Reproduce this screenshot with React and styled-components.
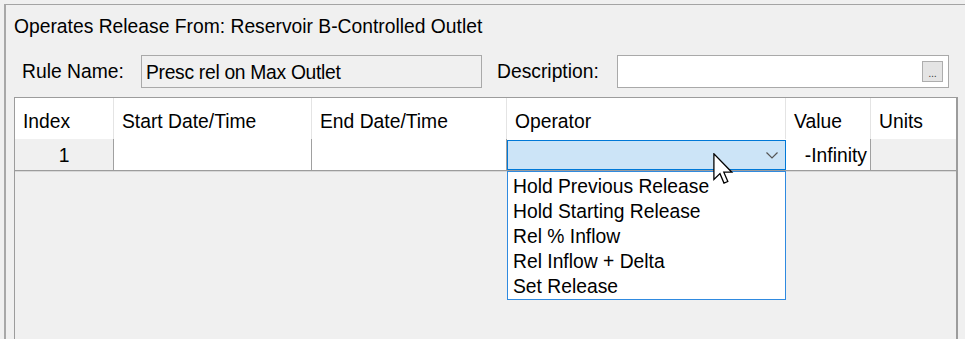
import styled, { createGlobalStyle } from 'styled-components';

const Global = createGlobalStyle`
  html, body {
    margin: 0;
    background: #f0f0f0;
    overflow: hidden;
    font-family: "Liberation Sans", Arial, sans-serif;
    color: #000;
  }
`;

const fs = '19.3px';

const Panel = styled.div`
  margin: 4px 0 0 4px;
  height: calc(100vh - 4px);
  box-sizing: border-box;
  border-top: 1px solid #a4a4a4;
  border-left: 2px solid #a8a8a8;
  padding: 11px 0 0 8px;
  display: flex;
  flex-direction: column;
`;

const Title = styled.div`
  font-size: ${fs};
  line-height: 22px;
`;

const FieldsRow = styled.div`
  display: flex;
  align-items: center;
  margin-top: 17px;
  padding-left: 8px;
`;

const Label = styled.div`
  width: ${p => p.$w}px;
  margin-left: ${p => p.$ml || 0}px;
  font-size: ${fs};
  line-height: 22px;
  flex-shrink: 0;
`;

const TextField = styled.div`
  width: ${p => p.$w}px;
  height: 33px;
  box-sizing: border-box;
  border: 1px solid #a9a9a9;
  background: ${p => (p.$readOnly ? '#f0f0f0' : '#fff')};
  display: flex;
  align-items: center;
  padding: 2px 0 0 4px;
  font-size: ${fs};
  letter-spacing: -0.3px;
  flex-shrink: 0;
`;

const DotsButton = styled.div`
  margin-left: auto;
  margin-right: 5px;
  margin-top: -2px;
  width: 21px;
  height: 21px;
  box-sizing: border-box;
  background: #e4e4e4;
  border: 1px solid #adadad;
  font-size: 11px;
  line-height: 10px;
  color: #444;
  display: flex;
  align-items: flex-end;
  justify-content: center;
  padding-bottom: 3px;
`;

const Table = styled.div`
  margin-top: 9px;
  width: 944px;
  flex: 1;
  box-sizing: border-box;
  border: 1px solid #9c9c9c;
  border-bottom: none;
  border-right: 2px solid #9c9c9c;
  background: #f0f0f0;
`;

const cols = '99px 198px 195px 279px 85px 1fr';

const HeaderRow = styled.div`
  display: grid;
  grid-template-columns: ${cols};
  height: 41px;
  background: #fff;
`;

const HeadCell = styled.div`
  border-right: 1px solid #e4e4e4;
  padding: 13px 0 0 8px;
  font-size: ${fs};
  line-height: 22px;
  &:last-child { border-right: none; }
`;

const DataRow = styled.div`
  display: grid;
  grid-template-columns: ${cols};
  height: 32px;
  box-sizing: border-box;
  border-bottom: 1px solid #9c9c9c;
  box-shadow: 0 1px 0 #d8d8d8;
`;

const Cell = styled.div`
  position: relative;
  border-right: ${p => (p.$noBorder ? 'none' : '1px solid #a0a0a0')};
  background: ${p => (p.$grey ? '#f0f0f0' : '#fff')};
  display: flex;
  align-items: center;
  justify-content: ${p => p.$align || 'flex-start'};
  padding-right: ${p => (p.$align === 'flex-end' ? '3px' : '0')};
  padding-top: 2px;
  font-size: ${fs};
  &:last-child { border-right: none; }
`;

const Combo = styled.div`
  position: absolute;
  left: 0;
  top: 1px;
  width: 279px;
  height: 30px;
  box-sizing: border-box;
  border: 1px solid #0078d7;
  background: #cce4f7;
  display: flex;
  align-items: center;
  justify-content: flex-end;
  padding-right: 7px;
`;

const ListBox = styled.div`
  position: absolute;
  left: 0;
  top: 32px;
  width: 279px;
  box-sizing: border-box;
  border: 1px solid #2f8ae0;
  background: #fff;
  padding: 2px 0 0;
  z-index: 2;
`;

const Option = styled.div`
  height: 25px;
  line-height: 25px;
  padding-left: 5px;
  font-size: ${fs};
  white-space: nowrap;
`;

const Pointer = styled.svg`
  position: absolute;
  left: 206px;
  top: 14px;
  z-index: 3;
`;

const operators = [
  'Hold Previous Release',
  'Hold Starting Release',
  'Rel % Inflow',
  'Rel Inflow + Delta',
  'Set Release',
];

const headers = ['Index', 'Start Date/Time', 'End Date/Time', 'Operator', 'Value', 'Units'];

export default function App() {
  return (
    <>
      <Global />
      <Panel>
        <Title>Operates Release From: Reservoir B-Controlled Outlet</Title>
        <FieldsRow>
          <Label $w={119}>Rule Name:</Label>
          <TextField $w={341} $readOnly>Presc rel on Max Outlet</TextField>
          <Label $w={120} $ml={15}>Description:</Label>
          <TextField $w={332}>
            <DotsButton>...</DotsButton>
          </TextField>
        </FieldsRow>
        <Table>
          <HeaderRow>
            {headers.map(h => (
              <HeadCell key={h}>{h}</HeadCell>
            ))}
          </HeaderRow>
          <DataRow>
            <Cell $grey $align="center">1</Cell>
            <Cell />
            <Cell />
            <Cell $noBorder>
              <Combo>
                <svg width="12" height="7" viewBox="0 0 12 7">
                  <path d="M0.5 0.5 L6 6 L11.5 0.5" fill="none" stroke="#555" strokeWidth="1.2" />
                </svg>
              </Combo>
              <ListBox>
                {operators.map(o => (
                  <Option key={o}>{o}</Option>
                ))}
              </ListBox>
              <Pointer width="21" height="32" viewBox="0 0 13 20">
                <path
                  d="M0.5 0.5 L0.5 16.5 L4.3 12.9 L6.8 18.8 L9.2 17.8 L6.7 12 L11.7 12 Z"
                  fill="#fff"
                  stroke="#000"
                  strokeWidth="0.8"
                  strokeLinejoin="miter"
                />
              </Pointer>
            </Cell>
            <Cell $align="flex-end">-Infinity</Cell>
            <Cell $grey />
          </DataRow>
        </Table>
      </Panel>
    </>
  );
}
